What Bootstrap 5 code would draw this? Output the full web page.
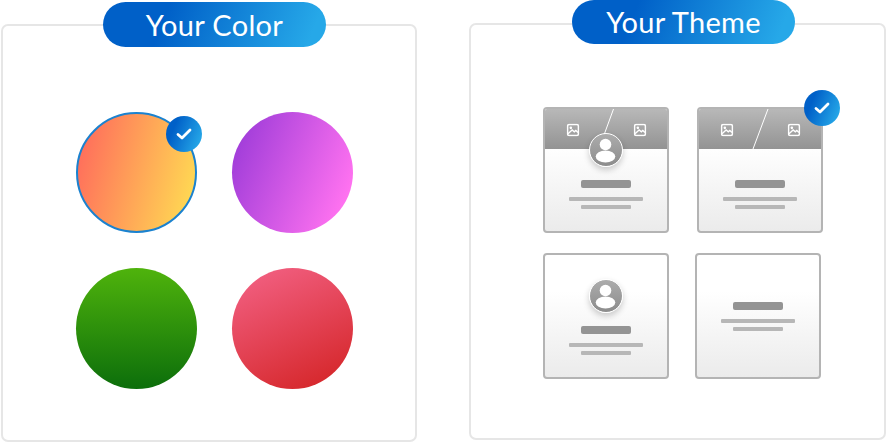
<!DOCTYPE html>
<html lang="en">
<head>
<meta charset="utf-8">
<title>Your Color / Your Theme</title>
<link href="https://cdn.jsdelivr.net/npm/bootstrap@5.3.0/dist/css/bootstrap.min.css" rel="stylesheet">
<style>
html,body{margin:0;background:#fff;overflow:hidden}
.stage{width:887px;height:442px;font-family:"Lato","Liberation Sans",sans-serif}
.pane{height:417px;border:2px solid #e6e6e6;border-radius:7px;background:#fff;position:relative}
.pane-a{width:416px;height:418px;margin-left:1px;margin-top:24px;padding:86px 0 0 73px}
.pane-b{width:417px;margin-left:52px;margin-top:23px;padding:82px 0 0 72px}
.pill{position:absolute;width:223px;height:45px;border-radius:22.5px;background:linear-gradient(112deg,#0060c8 28%,#26a8e8 92%);color:#fff;font-size:29px;line-height:45px;text-align:center;letter-spacing:.3px}
.pill-a{left:100px;top:-24px}
.pill-b{left:101px;top:-25px;height:44px;line-height:44px}
.swatches{display:grid;grid-template-columns:121px 121px;grid-auto-rows:121px;column-gap:35px;row-gap:35px}
.swatch{border-radius:50%;position:relative}
.sw-orange{background:linear-gradient(105deg,#ff6a5c 4%,#ffd853 92%);border:2px solid #1b82cf}
.sw-purple{background:linear-gradient(112deg,#9f3cd9 8%,#ff72f0 88%)}
.sw-green{background:linear-gradient(180deg,#4fb30c,#0c6e0b)}
.sw-red{background:linear-gradient(155deg,#f05c7c 12%,#d6282c 90%)}
.tick{position:absolute;width:36px;height:36px;border-radius:50%;background:linear-gradient(112deg,#0060c8 25%,#26a8e8 90%);display:flex;align-items:center;justify-content:center}
.tick-a{left:88px;top:2px}
.tick-b{right:-19.5px;top:-19px}
.themes{display:grid;grid-template-columns:126px 126px;grid-template-rows:126px 126px;column-gap:27px;row-gap:20px}
.tcard{border:2px solid #b4b4b4;border-radius:4px;position:relative;display:flex;flex-direction:column;background:linear-gradient(180deg,#fff 30%,#ebebeb 100%)}
.tcard-right{margin-left:.5px;margin-right:-.5px}
.tcard-shift{margin-left:-1.5px;margin-right:1.5px}
.thead{height:40px;background:linear-gradient(180deg,#b8b8b8,#939393);flex:none;border-radius:2px 2px 0 0;position:relative}
.thead svg{position:absolute;inset:0}
.tbody{display:flex;flex-direction:column;align-items:center;flex:1}
.pt-head{padding-top:31px}
.pt-ava{padding-top:71px}
.pt-none{padding-top:47px}
.bar-h{width:50px;height:8px;border-radius:2px;background:#949494}
.bar-l{height:4px;background:#b7b7b7;border-radius:1px;margin-top:9px}
.bar-l.w1{width:74px}
.bar-l.w2{width:50px;margin-top:4px}
.ava{position:absolute;left:44px;width:34px;height:34px;border-radius:50%;border:1.5px solid #fff;box-shadow:0 3px 6px rgba(0,0,0,.2);background:linear-gradient(180deg,#acacac,#8c8c8c);overflow:hidden}
.ava-a{top:24px}
.ava-b{top:24px}
.ava svg{display:block}
</style>
</head>
<body>
<svg width="0" height="0" class="position-absolute">
  <defs>
    <symbol id="pic" viewBox="0 0 12 12">
      <rect x="1" y="1" width="10" height="10" rx="1.4" fill="none" stroke="#fff" stroke-width="1.4"/>
      <circle cx="4" cy="4" r="1.2" fill="#fff"/>
      <path d="M1.400 9.400 5.200 6l2 1.700L8.600 6.400l2 2" fill="none" stroke="#fff" stroke-width="1.300"/>
    </symbol>
    <symbol id="person" viewBox="0 0 31 31">
      <circle cx="15.500" cy="10.500" r="5.800" fill="#fff"/>
      <ellipse cx="15.500" cy="22.500" rx="9.800" ry="6" fill="#fff"/>
    </symbol>
  </defs>
</svg>
<div class="stage d-flex align-items-start">
  <section class="pane pane-a">
    <div class="pill pill-a">Your Color</div>
    <div class="swatches">
      <div class="swatch sw-orange">
        <div class="tick tick-a"><svg width="18" height="14" viewBox="0 0 18 14"><path d="M3 7.500 7 11 15 3" fill="none" stroke="#fff" stroke-width="2.800" stroke-linecap="round" stroke-linejoin="round"/></svg></div>
      </div>
      <div class="swatch sw-purple"></div>
      <div class="swatch sw-green"></div>
      <div class="swatch sw-red"></div>
    </div>
  </section>
  <section class="pane pane-b">
    <div class="pill pill-b">Your Theme</div>
    <div class="themes">
      <div class="tcard">
        <div class="thead">
          <svg width="122" height="40" viewBox="0 0 122 40">
            <use href="#pic" x="21.500" y="14.500" width="13" height="13"/>
            <use href="#pic" x="88.500" y="14.500" width="13" height="13"/>
            <path d="M68.500 0 59 26" stroke="#fff" stroke-width="1"/>
          </svg>
        </div>
        <div class="ava ava-a"><svg width="31" height="31"><use href="#person"/></svg></div>
        <div class="tbody pt-head"><div class="bar-h"></div><div class="bar-l w1"></div><div class="bar-l w2"></div></div>
      </div>
      <div class="tcard tcard-right">
        <div class="thead">
          <svg width="122" height="40" viewBox="0 0 122 40">
            <use href="#pic" x="21.500" y="14.500" width="13" height="13"/>
            <use href="#pic" x="88.500" y="14.500" width="13" height="13"/>
            <path d="M69 0 54 40" stroke="#fff" stroke-width="1"/>
          </svg>
        </div>
        <div class="tick tick-b"><svg width="18" height="14" viewBox="0 0 18 14"><path d="M3 7.500 7 11 15 3" fill="none" stroke="#fff" stroke-width="2.800" stroke-linecap="round" stroke-linejoin="round"/></svg></div>
        <div class="tbody pt-head"><div class="bar-h"></div><div class="bar-l w1"></div><div class="bar-l w2"></div></div>
      </div>
      <div class="tcard">
        <div class="ava ava-b"><svg width="31" height="31"><use href="#person"/></svg></div>
        <div class="tbody pt-ava"><div class="bar-h"></div><div class="bar-l w1"></div><div class="bar-l w2"></div></div>
      </div>
      <div class="tcard tcard-shift">
        <div class="tbody pt-none"><div class="bar-h"></div><div class="bar-l w1"></div><div class="bar-l w2"></div></div>
      </div>
    </div>
  </section>
</div>
<script src="https://cdn.jsdelivr.net/npm/bootstrap@5.3.0/dist/js/bootstrap.bundle.min.js"></script>
</body>
</html>
